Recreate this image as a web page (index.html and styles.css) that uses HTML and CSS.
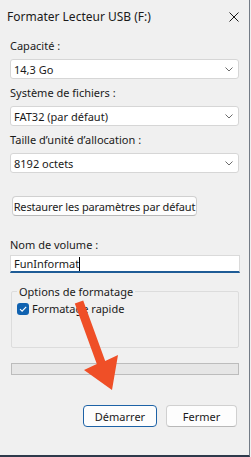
FILE: index.html
```html
<!DOCTYPE html>
<html lang="fr">
<head>
<meta charset="utf-8">
<title>Formater Lecteur USB (F:)</title>
<link rel="stylesheet" href="styles.css">
</head>
<body>
<div class="window">
  <div class="titlebar">
    <span class="title">Formater Lecteur USB (F:)</span>
    <svg class="close" width="10" height="10" viewBox="0 0 10 10"><path d="M0.5 0.5L9.5 9.5M9.5 0.5L0.5 9.5" stroke="#1a1a1a" stroke-width="1" fill="none"/></svg>
  </div>
  <div class="content">
    <div class="label">Capacité :</div>
    <div class="select"><span>14,3 Go</span><svg class="chev" width="8" height="5" viewBox="0 0 8 5"><path d="M0.5 0.5L4 4L7.5 0.5" stroke="#5a5a5a" stroke-width="0.9" fill="none"/></svg></div>
    <div class="label">Système de fichiers :</div>
    <div class="select"><span>FAT32 (par défaut)</span><svg class="chev" width="8" height="5" viewBox="0 0 8 5"><path d="M0.5 0.5L4 4L7.5 0.5" stroke="#5a5a5a" stroke-width="0.9" fill="none"/></svg></div>
    <div class="label">Taille d’unité d’allocation :</div>
    <div class="select"><span>8192 octets</span><svg class="chev" width="8" height="5" viewBox="0 0 8 5"><path d="M0.5 0.5L4 4L7.5 0.5" stroke="#5a5a5a" stroke-width="0.9" fill="none"/></svg></div>
    <div class="btn restore">Restaurer les paramètres par défaut</div>
    <div class="label vol">Nom de volume :</div>
    <div class="input"><span>FunInformat</span><span class="caret"></span></div>
    <fieldset class="group">
      <legend>Options de formatage</legend>
      <div class="check-row">
        <span class="checkbox"><svg width="12" height="12" viewBox="0 0 12 12"><path d="M3 6.2L5.1 8.2L9.2 3.8" stroke="#fff" stroke-width="1.1" fill="none"/></svg></span>
        <span>Formatage rapide</span>
      </div>
    </fieldset>
    <div class="progress"></div>
    <div class="actions">
      <div class="btn primary">Démarrer</div>
      <div class="btn close-btn">Fermer</div>
    </div>
  </div>
  <svg class="arrow" width="251" height="457" viewBox="0 0 251 457"><polygon points="74.8,303.6 83.2,300.4 105.2,360.9 118,355 112,390 84,370 96.8,364.1" fill="#ef4f27"/></svg>
</div>
</body>
</html>
```
FILE: styles.css
```css
html, body {
  margin: 0;
  padding: 0;
  background: #f0f0f0;
}
body {
  width: 251px;
  height: 457px;
  overflow: hidden;
  font-family: "Noto Sans", "Liberation Sans", sans-serif;
  font-size: 11px;
  color: #1a1a1a;
}
.window {
  position: relative;
  width: 249px;
  height: 455px;
  border-right: 1px solid #737b86;
  border-bottom: 2px solid #2e3a4b;
  background: #f0f0f0;
}
.titlebar {
  height: 33px;
  display: flex;
  align-items: center;
  justify-content: space-between;
  padding: 0 10px 0 7px;
  box-sizing: border-box;
  font-size: 12px;
}
.title {
  line-height: 15px;
  margin-top: -1px;
}
.close {
  display: block;
}
.content {
  padding: 5px 10px 0 10px;
  display: flex;
  flex-direction: column;
}
.label {
  line-height: 15px;
  height: 15px;
  margin-bottom: 6px;
  white-space: nowrap;
}
.select {
  height: 20px;
  box-sizing: border-box;
  background: #ffffff;
  border: 1px solid #d6d6d6;
  border-radius: 3px;
  display: flex;
  align-items: center;
  justify-content: space-between;
  padding: 0 5px 0 3px;
  line-height: 15px;
  margin-bottom: 6px;
  width: 229px;
}
.chev {
  display: block;
}
.btn {
  box-sizing: border-box;
  background: #fdfdfd;
  border: 1px solid #d0d0d0;
  border-bottom-color: #b8b8b8;
  border-radius: 4px;
  display: flex;
  align-items: center;
  justify-content: center;
  line-height: 15px;
  white-space: nowrap;
}
.restore {
  margin: 17px 0 0 2px;
  width: 185px;
  height: 20px;
  letter-spacing: -0.15px;
}
.vol {
  margin-top: 21px;
  margin-bottom: 3px;
}
.input {
  width: 230px;
  height: 18px;
  box-sizing: border-box;
  background: #ffffff;
  border: 1px solid #dadada;
  border-bottom: 2px solid #1f5c96;
  display: flex;
  align-items: center;
  padding: 0 3px;
  line-height: 15px;
}
.caret {
  display: inline-block;
  width: 1px;
  height: 14px;
  background: #000;
}
.group {
  margin: 11px 0 0 1px;
  width: 228px;
  box-sizing: border-box;
  border: 1px solid #dcdcdc;
  border-radius: 2px;
  padding: 0 0 31px 5px;
  min-width: 0;
}
.group legend {
  padding: 0 2px;
  line-height: 15px;
}
.check-row {
  display: flex;
  align-items: center;
  gap: 3px;
  line-height: 15px;
  margin-top: 2px;
}
.checkbox {
  width: 12px;
  height: 12px;
  border-radius: 3px;
  background: #1062b0;
  display: block;
}
.checkbox svg {
  display: block;
}
.progress {
  margin: 15px 0 0 1px;
  width: 228px;
  height: 12px;
  box-sizing: border-box;
  background: #e6e6e6;
  border: 1px solid #bcbcbc;
}
.actions {
  display: flex;
  justify-content: flex-end;
  gap: 9px;
  margin: 30px 2px 0 0;
}
.actions .btn {
  height: 22px;
}
.primary {
  width: 74px;
  border: 1px solid #1d62a6;
}
.close-btn {
  width: 71px;
}
.arrow {
  position: absolute;
  left: 0;
  top: 0;
  pointer-events: none;
}
```
